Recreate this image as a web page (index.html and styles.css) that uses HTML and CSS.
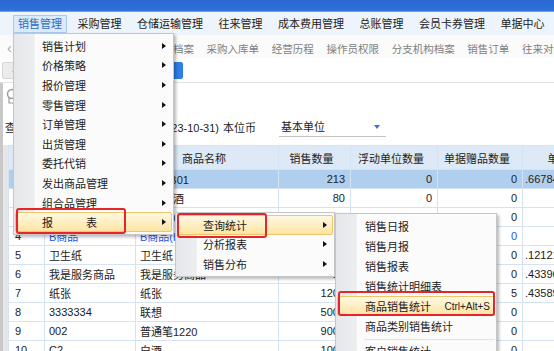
FILE: index.html
```html
<!DOCTYPE html>
<html lang="zh-CN">
<head>
<meta charset="UTF-8" />
<title>销售管理 - 商品销售统计</title>
<link rel="stylesheet" href="styles.css">
</head>
<body>
<div class="app">
	<div class="titlebar"></div>

	<nav class="menubar">
		<span class="mb-item open">销售管理</span>
		<span class="mb-item">采购管理</span>
		<span class="mb-item">仓储运输管理</span>
		<span class="mb-item">往来管理</span>
		<span class="mb-item">成本费用管理</span>
		<span class="mb-item">总账管理</span>
		<span class="mb-item">会员卡券管理</span>
		<span class="mb-item">单据中心</span>
	</nav>

	<div class="shortcuts">
		<span class="sc-prev">‹</span>
		<span>销售出库单</span>
		<span>客户档案</span>
		<span>商品档案</span>
		<span>采购入库单</span>
		<span>经营历程</span>
		<span>操作员权限</span>
		<span>分支机构档案</span>
		<span>销售订单</span>
		<span>往来对账</span>
	</div>

	<div class="actions">
		<span class="btn">导出</span>
		<span class="btn btn-blue">查询</span>
	</div>

	<div class="panel">
		<div class="toolrow">
			<svg class="tool-ico" width="12" height="16" viewBox="0 0 12 16"><circle cx="6" cy="6" r="4.5" fill="none" stroke="#9a9a9a" stroke-width="1.4"/><path d="M3 10 L3 15 L9 15" fill="none" stroke="#9a9a9a" stroke-width="1.2"/></svg>
		</div>
		<div class="filter">
			<span>查询日期范围：(2023-10-01 至 2023-10-31)</span>
			<span class="currency">本位币</span>
			<span class="select">基本单位<i class="caret"></i></span>
		</div>

		<div class="grid-wrap">
			<div class="strip"></div>
			<table class="grid">
				<colgroup>
					<col style="width:36px"><col style="width:91px"><col style="width:143px"><col style="width:72px"><col style="width:87px"><col style="width:85px"><col style="width:78px">
				</colgroup>
				<thead>
					<tr><th></th><th>商品编码</th><th>商品名称</th><th>销售数量</th><th>浮动单位数量</th><th>单据赠品数量</th><th>单价</th></tr>
				</thead>
				<tbody>
					<tr class="sel"><td>1</td><td>A001</td><td>商品AB01</td><td class="num">213</td><td class="num">0</td><td class="num">0</td><td class="dec">.66784512</td></tr>
					<tr><td>2</td><td>M002</td><td>茅台白酒</td><td class="num">80</td><td class="num">0</td><td class="num">0</td><td></td></tr>
					<tr><td>3</td><td>B001</td><td>商品B001</td><td class="num">100</td><td class="num">0</td><td class="num">0</td><td></td></tr>
					<tr class="blue"><td>4</td><td>B商品</td><td>B商品(bc)</td><td class="num">12</td><td class="num">0</td><td class="num">0</td><td></td></tr>
					<tr><td>5</td><td>卫生纸</td><td>卫生纸</td><td class="num">30</td><td class="num">0</td><td class="num">0</td><td class="dec">.12121212</td></tr>
					<tr><td>6</td><td>我是服务商品</td><td>我是服务商品</td><td class="num">15</td><td class="num">0</td><td class="num">0</td><td class="dec">.43396226</td></tr>
					<tr><td>7</td><td>纸张</td><td>纸张</td><td class="num">1200</td><td class="num">0</td><td class="num">5</td><td class="dec">.43589744</td></tr>
					<tr><td>8</td><td>3333334</td><td>联想</td><td class="num">5000</td><td class="num">0</td><td class="num">0</td><td></td></tr>
					<tr><td>9</td><td>002</td><td>普通笔1220</td><td class="num">9000</td><td class="num">0</td><td class="num">0</td><td></td></tr>
					<tr><td>10</td><td>C2</td><td>白酒</td><td class="num">1000</td><td class="num">0</td><td class="num">0</td><td></td></tr>
				</tbody>
			</table>
		</div>
	</div>

	<!-- dropdown: 销售管理 -->
	<div class="menu m1">
		<div class="mi">销售计划<i class="arrow"></i></div>
		<div class="mi">价格策略<i class="arrow"></i></div>
		<div class="mi">报价管理<i class="arrow"></i></div>
		<div class="mi">零售管理<i class="arrow"></i></div>
		<div class="mi">订单管理<i class="arrow"></i></div>
		<div class="mi">出货管理<i class="arrow"></i></div>
		<div class="mi">委托代销<i class="arrow"></i></div>
		<div class="mi">发出商品管理<i class="arrow"></i></div>
		<div class="mi">组合品管理<i class="arrow"></i></div>
		<div class="mi hot">报　　　表<i class="arrow"></i></div>
	</div>

	<div class="menu m2">
		<div class="mi hot">查询统计<i class="arrow"></i></div>
		<div class="mi">分析报表<i class="arrow"></i></div>
		<div class="mi">销售分布<i class="arrow"></i></div>
	</div>

	<div class="menu m3">
		<div class="mi">销售日报</div>
		<div class="mi">销售月报</div>
		<div class="mi">销售报表</div>
		<div class="mi">销售统计明细表</div>
		<div class="mi hot">商品销售统计<span class="key">Ctrl+Alt+S</span></div>
		<div class="mi">商品类别销售统计</div>
		<div class="sep"></div>
		<div class="mi">客户销售统计</div>
	</div>

	<!-- red annotation boxes -->
	<div class="mark mark1"></div>
	<div class="mark mark2"></div>
	<div class="mark mark3"></div>
</div>
</body>
</html>
```

FILE: styles.css
```css
* {
	box-sizing: border-box;
}

html, body {
	margin: 0;
	padding: 0;
}

body {
	width: 554px;
	height: 351px;
	overflow: hidden;
	background-color: white;
	font-family: "Liberation Sans", "Noto Sans CJK SC", sans-serif;
	font-size: 11px;
	color: #222;
}

.app {
	position: relative;
	width: 554px;
	height: 351px;
	overflow: hidden;
}

.titlebar {
	height: 12px;
	background: linear-gradient(#2968d0, #2d73da);
	border-bottom: 1px solid #6aa0e8;
}

/* top menu */
.menubar {
	height: 23px;
	display: flex;
	align-items: center;
	gap: 5.5px;
	padding-left: 13px;
	background-color: #edf4fb;
}

.mb-item {
	height: 18px;
	line-height: 16px;
	padding: 0 4px;
	border: 1px solid transparent;
	white-space: nowrap;
}

.mb-item.open {
	background-color: #dbeafb;
	border-color: #a9cbef;
	color: #2f69c2;
}

/* shortcut strip */
.shortcuts {
	height: 23px;
	display: flex;
	align-items: center;
	gap: 12.7px;
	padding: 3px 0 0 7px;
	background-color: #fbfbfb;
	color: #808080;
	font-size: 10.5px;
	white-space: nowrap;
}

.sc-prev {
	width: 8px;
	margin-right: 7.7px;
	color: #aaa;
	font-size: 14px;
}

.actions {
	height: 25px;
	display: flex;
	align-items: center;
	gap: 80px;
	border-bottom: 1px solid #e2e2e2;
}

.btn {
	height: 17px;
	line-height: 17px;
	padding: 0 8px 0 9px;
	margin-left: 2px;
	background-color: #ececec;
	border: 1px solid #d6d6d6;
	border-radius: 2px;
	font-size: 11px;
}

.btn-blue {
	width: 60px;
	margin-left: 0;
	background-color: #2f7de6;
	border-color: #2f7de6;
	color: white;
}

/* content */
.panel {
	border-left: 3px solid #c8c8c8;
}

.toolrow {
	height: 29px;
	padding: 5px 0 0 3px;
}

.tool-ico {
	display: block;
}

.filter {
	height: 29px;
	display: flex;
	align-items: center;
	padding-left: 2px;
	margin-bottom: 4px;
	white-space: nowrap;
}

.currency {
	margin-left: 4px;
}

.select {
	position: relative;
	width: 107px;
	height: 20px;
	line-height: 20px;
	margin-left: 23px;
	padding-left: 2px;
	border-bottom: 1px solid #c4c4c4;
}

.caret {
	position: absolute;
	right: 6px;
	top: 8px;
	border-top: 4px solid #3b76c6;
	border-left: 3.5px solid transparent;
	border-right: 3.5px solid transparent;
}

.grid-wrap {
	display: flex;
}

.strip {
	width: 5px;
	flex: none;
	background-color: #e6e6e6;
}

.grid {
	border-collapse: collapse;
	table-layout: fixed;
	width: 592px;
	flex: none;
}

.grid th, .grid td {
	border: 1px solid #d4e2f1;
	padding: 0 4px;
	white-space: nowrap;
	overflow: hidden;
	text-align: left;
}

.grid tr {
	height: 19px;
}

.grid thead tr {
	height: 24px;
}

.grid th {
	background-color: #dde9f6;
	font-weight: normal;
	text-align: center;
	padding-right: 10px;
}

.grid td:first-child {
	padding-left: 6px;
}

.grid td.num {
	text-align: right;
	padding-right: 5px;
}

.grid td.dec {
	padding-left: 2px;
}

.grid tr.sel td {
	background-color: #b0cfee;
}

.grid tr.blue td {
	color: #2355e0;
}

.grid tr.blue td:first-child {
	color: #222;
}

/* popup menus */
.menu {
	position: absolute;
	padding: 2px 1px;
	background: #fbfbfb linear-gradient(to right, #e5e7ea 0, #eceef0 21px, #ffffff 21px, #ffffff 22px, transparent 22px);
	border: 1px solid #c6c6c6;
	box-shadow: 2px 2px 3px rgba(0, 0, 0, 0.28);
	white-space: nowrap;
}

.m1 {
	left: 13px;
	top: 33px;
	width: 161px;
	z-index: 2;
}

.m2 {
	left: 175px;
	top: 212px;
	width: 160px;
	z-index: 3;
}

.m3 {
	left: 335px;
	top: 213px;
	width: 162px;
	z-index: 4;
	padding-bottom: 0;
}

.mi {
	display: flex;
	align-items: center;
	height: 19.6px;
	padding: 0 5px 0 26px;
	border: 1px solid transparent;
	border-radius: 2px;
}

.m2 .mi {
	padding-left: 25px;
}

.m3 .mi {
	height: 20px;
	padding-left: 27px;
	padding-right: 4px;
}

.mi.hot {
	background: linear-gradient(#fff8e2, #fde4a2);
	border-color: #efc56a;
}

.arrow {
	margin-left: auto;
	border-left: 4px solid #111;
	border-top: 3.5px solid transparent;
	border-bottom: 3.5px solid transparent;
}

.key {
	margin-left: auto;
	font-size: 10px;
}

.sep {
	height: 4px;
	margin-left: 27px;
	border-top: 1px solid transparent;
	border-bottom: 1px solid #e2e2e2;
	margin-bottom: 1px;
}

/* red annotation boxes */
.mark {
	position: absolute;
	z-index: 5;
	border: 2px solid #e5252b;
	border-radius: 3px;
}

.mark1 {
	left: 16px;
	top: 208px;
	width: 110px;
	height: 26px;
}

.mark2 {
	left: 177px;
	top: 213px;
	width: 90px;
	height: 25px;
}

.mark3 {
	left: 338px;
	top: 291px;
	width: 157px;
	height: 25px;
}
```
